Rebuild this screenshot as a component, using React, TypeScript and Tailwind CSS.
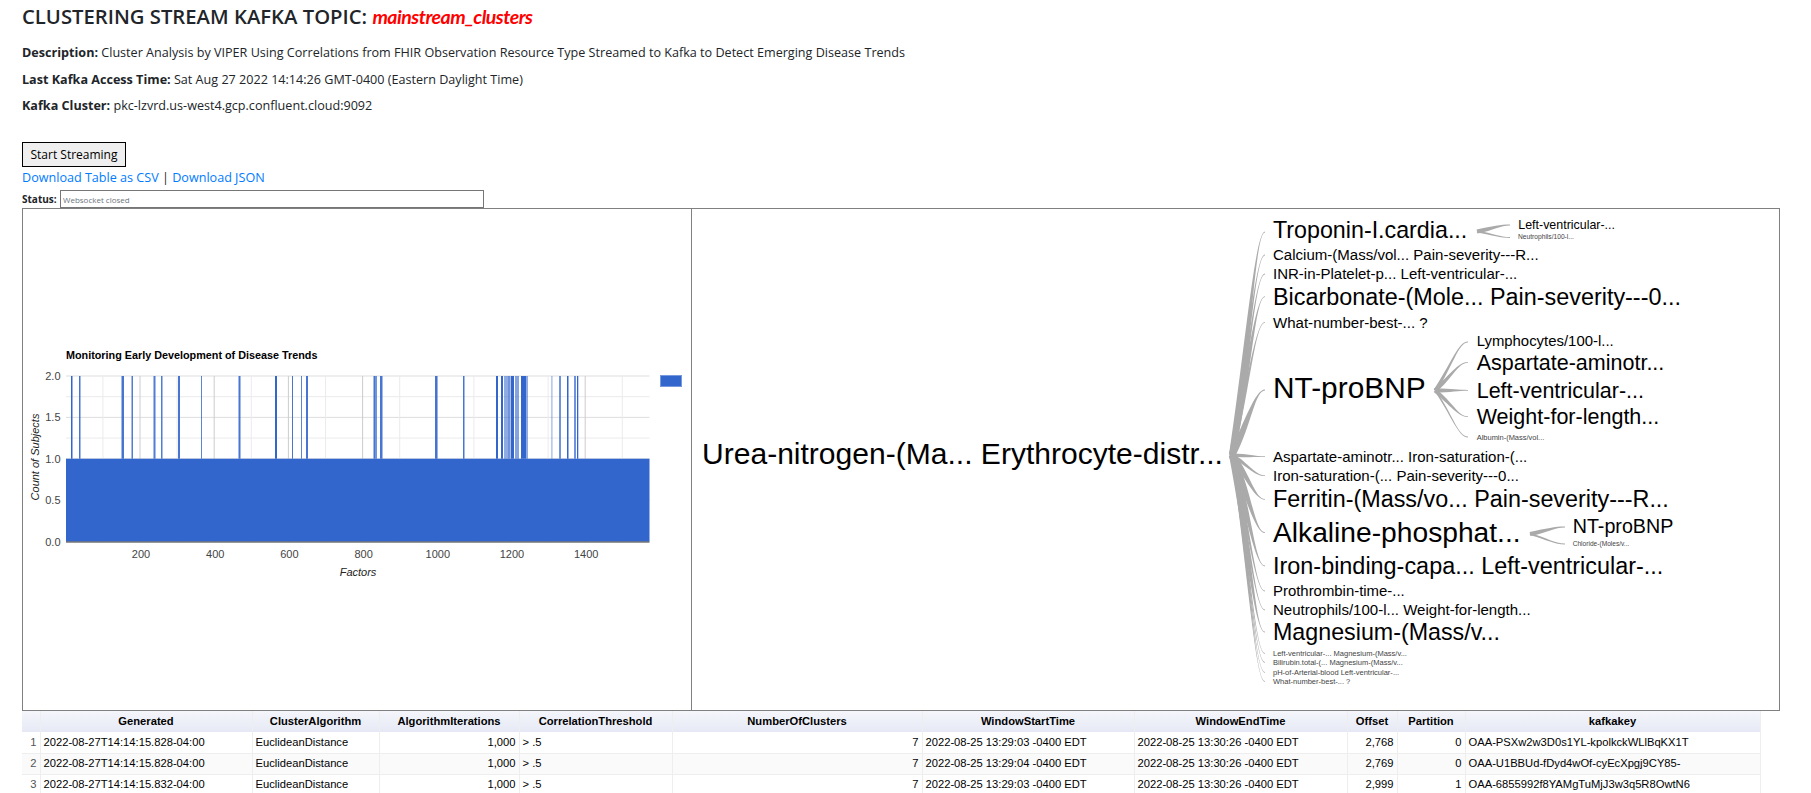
import React from "react";

const X0 = 66;
const fx = (v: number) => 140 + (v - 200) * 0.371;
const fy = (v: number) => 541.5 - v * 82.75;

// blue spikes: [left, right, opacity]
const spikes: [number, number, number][] = [
  [71, 72.5, 1], [79, 80.5, 0.9], [121.5, 124, 0.9], [131.5, 133, 0.85], [153.5, 155.5, 0.85], [161, 162.5, 0.85],
  [178, 180, 0.9], [201, 202, 0.8], [238.5, 240.5, 0.9], [275, 277, 1], [292, 293, 0.9], [301, 302, 0.8], [306, 308, 0.9],
  [373.5, 375, 0.9], [375, 377, 0.7], [380, 382.5, 0.9], [435, 437.5, 0.9], [463, 464.5, 0.9],
  [496, 498, 1], [501, 503, 1], [504, 508, 0.55], [508, 510, 0.7], [510.7, 514, 1], [515, 519, 0.6], [521, 526, 1], [526, 528, 0.55],
  [551, 552.7, 0.35], [559, 561, 0.7], [567, 568.5, 1], [574, 576, 0.7], [577, 578.3, 1],
];

const vGridMinor = [100, 300, 500, 700, 900, 1100, 1300, 1500];
const vGridMajor = [200, 400, 600, 800, 1000, 1200, 1400];

type Node = { t: string; x: number; y: number; w: number };
const L1 = 1273;
const nodes: Node[] = [
  { t: "Urea-nitrogen-(Ma... Erythrocyte-distr...", x: 702, y: 453.5, w: 521 },
  { t: "Troponin-I.cardia...", x: L1, y: 230, w: 194.3 },
  { t: "Left-ventricular-...", x: 1518.3, y: 225, w: 96.7 },
  { t: "Neutrophils/100-l...", x: 1518, y: 236.7, w: 56 },
  { t: "Calcium-(Mass/vol... Pain-severity---R...", x: L1, y: 255, w: 265.7 },
  { t: "INR-in-Platelet-p... Left-ventricular-...", x: L1, y: 274, w: 244.3 },
  { t: "Bicarbonate-(Mole... Pain-severity---0...", x: L1, y: 296.7, w: 408 },
  { t: "What-number-best-... ?", x: L1, y: 322.3, w: 154.7 },
  { t: "NT-proBNP", x: L1, y: 387.5, w: 152.7 },
  { t: "Lymphocytes/100-l...", x: 1476.7, y: 341, w: 137 },
  { t: "Aspartate-aminotr...", x: 1476.7, y: 362.3, w: 187.7 },
  { t: "Left-ventricular-...", x: 1476.7, y: 390.3, w: 167.3 },
  { t: "Weight-for-length...", x: 1476.7, y: 416.7, w: 182.7 },
  { t: "Albumin-(Mass/vol...", x: 1476.7, y: 437, w: 67.7 },
  { t: "Aspartate-aminotr... Iron-saturation-(...", x: L1, y: 456.7, w: 254.3 },
  { t: "Iron-saturation-(... Pain-severity---0...", x: L1, y: 475.7, w: 246 },
  { t: "Ferritin-(Mass/vo... Pain-severity---R...", x: L1, y: 499.3, w: 396 },
  { t: "Alkaline-phosphat...", x: L1, y: 532, w: 247.7 },
  { t: "NT-proBNP", x: 1572.7, y: 526, w: 100.7 },
  { t: "Chloride-(Moles/v...", x: 1572.7, y: 543.7, w: 56.7 },
  { t: "Iron-binding-capa... Left-ventricular-...", x: L1, y: 566, w: 390.3 },
  { t: "Prothrombin-time-...", x: L1, y: 591, w: 131.7 },
  { t: "Neutrophils/100-l... Weight-for-length...", x: L1, y: 610, w: 257.7 },
  { t: "Magnesium-(Mass/v...", x: L1, y: 632, w: 227 },
  { t: "Left-ventricular-... Magnesium-(Mass/v...", x: L1, y: 653.3, w: 134 },
  { t: "Bilirubin.total-(... Magnesium-(Mass/v...", x: L1, y: 662.3, w: 130 },
  { t: "pH-of-Arterial-blood Left-ventricular-...", x: L1, y: 672.3, w: 126.3 },
  { t: "What-number-best-... ?", x: L1, y: 681.3, w: 77.3 },
];

function measure(text: string): number {
  const c = document.createElement("canvas").getContext("2d");
  if (!c) return text.length * 50;
  c.font = '100px "Liberation Sans"';
  return c.measureText(text).width;
}

// tapered branch: thick at the shared origin, hairline at the child label
function branch(x0: number, y0: number, x1: number, y1: number, w: number) {
  const dx = x1 - x0;
  const dy = y1 - y0;
  const len = Math.hypot(dx, dy);
  const ox = (dy / len) * (w / 2);
  const oy = (-dx / len) * (w / 2);
  const c1x = x0 + dx * 0.5;
  const c1y = y0 + dy * 0.5;
  const c2x = x0 + dx * 0.7;
  return `M${x0 + ox} ${y0 + oy}C${c1x + ox} ${c1y + oy} ${c2x} ${y1 - 0.4} ${x1} ${y1 - 0.4}L${x1} ${y1 + 0.4}C${c2x} ${y1 + 0.4} ${c1x - ox} ${c1y - oy} ${x0 - ox} ${y0 - oy}Z`;
}

const rootKids: [number, number][] = [
  [232, 6], [255, 3.5], [274, 3.5], [296.7, 6], [322.3, 3.5], [390, 7], [456.7, 3.5], [475.7, 3.5], [499.3, 6], [532.7, 7], [566, 6], [591, 3.5], [610, 3.5], [632, 6], [653.3, 2], [662.3, 2], [672.3, 2], [681.3, 2],
];
const bnpKids: [number, number][] = [[342, 3], [362.3, 4], [390.3, 4], [416.7, 4], [437, 1.6]];

const columns = [
  { h: "Generated", w: 212 },
  { h: "ClusterAlgorithm", w: 127 },
  { h: "AlgorithmIterations", w: 140 },
  { h: "CorrelationThreshold", w: 153 },
  { h: "NumberOfClusters", w: 250 },
  { h: "WindowStartTime", w: 212 },
  { h: "WindowEndTime", w: 213 },
  { h: "Offset", w: 50 },
  { h: "Partition", w: 68 },
  { h: "kafkakey", w: 295 },
];

const rows = [
  ["2022-08-27T14:14:15.828-04:00", "EuclideanDistance", "1,000", "> .5", "7", "2022-08-25 13:29:03 -0400 EDT", "2022-08-25 13:30:26 -0400 EDT", "2,768", "0", "OAA-PSXw2w3D0s1YL-kpolkckWLlBqKX1T"],
  ["2022-08-27T14:14:15.828-04:00", "EuclideanDistance", "1,000", "> .5", "7", "2022-08-25 13:29:04 -0400 EDT", "2022-08-25 13:30:26 -0400 EDT", "2,769", "0", "OAA-U1BBUd-fDyd4wOf-cyEcXpgj9CY85-"],
  ["2022-08-27T14:14:15.832-04:00", "EuclideanDistance", "1,000", "> .5", "7", "2022-08-25 13:29:03 -0400 EDT", "2022-08-25 13:30:26 -0400 EDT", "2,999", "1", "OAA-6855992f8YAMgTuMjJ3w3q5R8OwtN6"],
];
const rightAligned = new Set([2, 4, 7, 8]);

function BarChart() {
  return (
    <svg className="block" width="668" height="501" viewBox="23 209 668 501" fontFamily='"Liberation Sans", Arial, sans-serif'>
      {[0.25, 0.75, 1.25, 1.75].map((v) => (
        <line key={v} x1={X0} x2="649.5" y1={fy(v)} y2={fy(v)} stroke="#ebebeb" />
      ))}
      {[0.5, 1, 1.5, 2].map((v) => (
        <line key={v} x1={X0} x2="649.5" y1={fy(v)} y2={fy(v)} stroke="#dddddd" />
      ))}
      {vGridMinor.map((v) => (
        <line key={v} x1={fx(v)} x2={fx(v)} y1={fy(2)} y2={fy(0)} stroke="#ebebeb" />
      ))}
      {vGridMajor.map((v) => (
        <line key={v} x1={fx(v)} x2={fx(v)} y1={fy(2)} y2={fy(0)} stroke="#cccccc" />
      ))}
      {spikes.map(([a, b, o]) => (
        <rect key={a} x={a} y={fy(2)} width={b - a} height={fy(1) - fy(2)} fill="#3366cc" opacity={o} />
      ))}
      <rect x={X0} y={fy(1)} width="583.5" height={fy(0) - fy(1)} fill="#3366cc" />
      <line x1={X0} x2="649.5" y1={fy(0) + 0.5} y2={fy(0) + 0.5} stroke="#333333" />
      <rect x="660.5" y="375.5" width="21" height="11" fill="#3366cc" stroke="#7799dd" />

      <text x={X0} y="359" fontSize="10.8" fontWeight="700" fill="#000">
        Monitoring Early Development of Disease Trends
      </text>
      {[0, 0.5, 1, 1.5, 2].map((v) => (
        <text key={v} x="60.5" y={fy(v) + 4} textAnchor="end" fontSize="11" fill="#444">
          {v.toFixed(1)}
        </text>
      ))}
      {vGridMajor.map((v) => (
        <text key={v} x={fx(v) + 1} y="558" textAnchor="middle" fontSize="11" fill="#444">
          {v}
        </text>
      ))}
      <text x="358" y="576" textAnchor="middle" fontSize="11" fontStyle="italic" fill="#222">
        Factors
      </text>
      <text transform="translate(39 457) rotate(-90)" textAnchor="middle" fontSize="11" fontStyle="italic" fill="#222">
        Count of Subjects
      </text>
    </svg>
  );
}

function WordTree() {
  return (
    <svg className="block" width="1087" height="501" viewBox="692 209 1087 501" fontFamily='"Liberation Sans", Arial, sans-serif'>
      <g fill="#aaaaaa">
        {rootKids.map(([y, w]) => (
          <path key={y} d={branch(1232, 455, 1265, y, w)} />
        ))}
        {bnpKids.map(([y, w]) => (
          <path key={y} d={branch(1435, 390.5, 1468, y, w)} />
        ))}
        <path d={branch(1477, 231.5, 1510, 225, 4)} />
        <path d={branch(1477, 231.5, 1510, 237.5, 2)} />
        <path d={branch(1530, 534, 1565, 527, 4)} />
        <path d={branch(1530, 534, 1565, 544, 2)} />
      </g>
      {nodes.map((n, i) => {
        const size = (n.w / measure(n.t)) * 100;
        return (
          <text key={i} x={n.x} y={n.y} dy="0.35em" fontSize={size.toFixed(2)} fill={size < 9 ? "#444" : "#000"}>
            {n.t}
          </text>
        );
      })}
    </svg>
  );
}

export default function App() {
  return (
    <div className="h-[793px] w-[1811px] overflow-hidden bg-white font-['Open_Sans',sans-serif] text-[#212529]">
      <div className="pl-[22px]">
        <h1 className="pt-[2px] text-[20.27px] leading-[28px] font-semibold">
          CLUSTERING STREAM KAFKA TOPIC:{" "}
          <span className="font-['Lato',sans-serif] text-[19.5px] font-bold tracking-[-0.5px] text-[#ff0000] italic">mainstream_clusters</span>
        </h1>
        <div className="mt-[9px] text-[12.6px] leading-[26.5px]">
          <p>
            <b className="font-bold">Description:</b> Cluster Analysis by VIPER Using Correlations from FHIR Observation Resource Type Streamed to Kafka to Detect Emerging Disease Trends
          </p>
          <p>
            <b className="font-bold">Last Kafka Access Time:</b> Sat Aug 27 2022 14:14:26 GMT-0400 (Eastern Daylight Time)
          </p>
          <p>
            <b className="font-bold">Kafka Cluster:</b> pkc-lzvrd.us-west4.gcp.confluent.cloud:9092
          </p>
        </div>
        <button className="mt-[22.5px] block h-[25px] w-[104px] border border-black bg-[#efefef] text-[12px] text-black">
          Start Streaming
        </button>
        <div className="mt-[1px] text-[12.6px] leading-[19px] text-[#212529]">
          <a className="text-[#007bff]">Download Table as CSV</a> | <a className="text-[#007bff]">Download JSON</a>
        </div>
        <div className="mt-[3px] flex h-[18px] items-center">
          <b className="w-[38px] text-[10px] font-bold">Status:</b>
          <input
            readOnly
            value="Websocket closed"
            className="h-[18px] w-[424px] border border-[#767676] px-[2px] text-[8px] text-[#6c757d] outline-none"
          />
        </div>
      </div>

      <div className="ml-[22px] flex h-[503px] w-[1758px] border border-[#808080]">
        <div className="w-[669px] shrink-0 border-r border-[#808080]">
          <BarChart />
        </div>
        <div className="flex-1">
          <WordTree />
        </div>
      </div>

      <table className="ml-[22px] table-fixed border-collapse font-['Liberation_Sans',Arial,sans-serif] text-[11.2px] text-black">
        <colgroup>
          <col className="w-[18px]" />
          {columns.map((c) => (
            <col key={c.h} style={{ width: c.w }} />
          ))}
        </colgroup>
        <thead>
          <tr className="h-[21px] bg-gradient-to-b from-[#f5f6fb] to-[#e6e9f5]">
            <th className="border-r border-[#eeeeee]" />
            {columns.map((c) => (
              <th key={c.h} className="border-r border-[#eeeeee] px-1 text-center font-bold text-[#000]">
                {c.h}
              </th>
            ))}
          </tr>
        </thead>
        <tbody>
          {rows.map((r, i) => (
            <tr key={i} className={`h-[21px] border-b border-[#eeeeee] ${i === 1 ? "bg-[#fafafa]" : "bg-white"}`}>
              <td className="border-r border-[#eeeeee] pr-[3px] text-right text-[#555]">{i + 1}</td>
              {r.map((v, j) => (
                <td
                  key={j}
                  className={`overflow-hidden border-r border-[#eeeeee] px-[3px] whitespace-nowrap ${rightAligned.has(j) ? "text-right" : "text-left"}`}
                >
                  {v}
                </td>
              ))}
            </tr>
          ))}
        </tbody>
      </table>
    </div>
  );
}
